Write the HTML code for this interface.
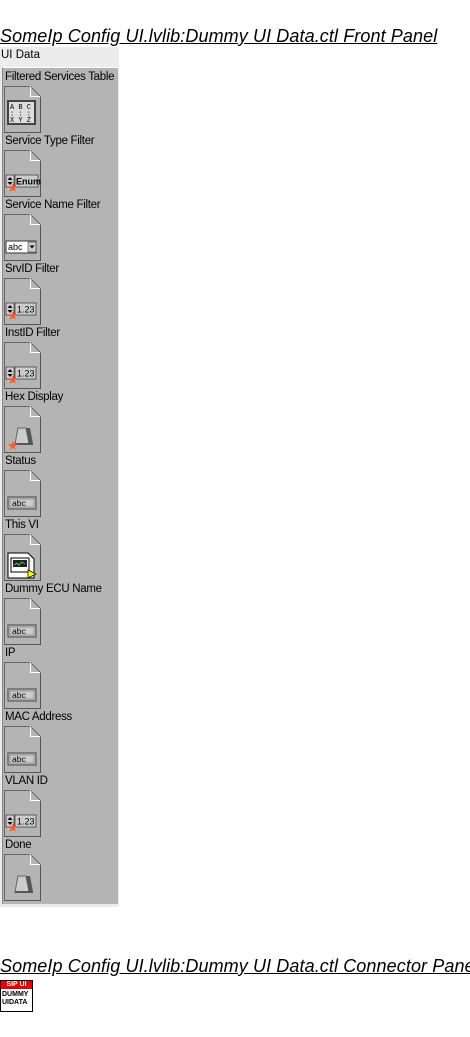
<!DOCTYPE html><html><head><style>
body{margin:0;background:#fff;width:470px;height:1037px;position:relative;overflow:hidden;font-family:"Liberation Sans",sans-serif}
.t{position:absolute;left:0;font-style:italic;text-decoration:underline;font-size:18px;color:#000;white-space:nowrap;letter-spacing:0.1px}
.l{position:absolute;left:5px;font-size:11.5px;color:#000;white-space:nowrap;letter-spacing:-0.3px}
.d{position:absolute;left:4px}
</style></head><body>
<div class="t" style="top:26px">SomeIp Config UI.lvlib:Dummy UI Data.ctl Front Panel</div>
<div style="position:absolute;left:0;top:47px;width:119px;height:860px;background:#ececec"></div>
<div style="position:absolute;left:1px;top:49px;font-size:11.5px">UI Data</div>
<div style="position:absolute;left:2px;top:67px;width:115px;height:836px;background:#b4b4b4;border-top:1px solid #fff;border-left:1px solid #888"></div>
<div id="c"></div>
<script>
var items=[["Filtered Services Table","tbl"],["Service Type Filter","enum"],["Service Name Filter","ring"],["SrvID Filter","num"],["InstID Filter","num"],["Hex Display","bool"],["Status","str"],["This VI","vi"],["Dummy ECU Name","str"],["IP","str"],["MAC Address","str"],["VLAN ID","num"],["Done","boolns"]];
var star='<text x="3" y="42" font-size="13" fill="#ff5a28" font-family="DejaVu Sans">★</text>';
var ud='<rect x="2" y="25" width="8" height="12" fill="#d0d0d0" stroke="#444" stroke-width="0.8"/><path d="M3.5 30h5l-2.5-3z M3.5 32h5l-2.5 3z" fill="#000"/>';
function g(k){switch(k){
case"tbl":return'<rect x="3" y="14" width="29" height="25" fill="#444"/><rect x="5" y="16" width="25" height="21" fill="#ddd"/><text x="6" y="23" font-size="7" font-family="Liberation Mono">A B C</text><text x="6" y="29.5" font-size="7" font-family="Liberation Mono">: : :</text><text x="6" y="36" font-size="7" font-family="Liberation Mono">X Y Z</text>';
case"enum":return ud+'<rect x="11" y="25" width="23" height="12" fill="#ccc" stroke="#444" stroke-width="0.8"/><text x="12" y="34.5" font-size="9" font-weight="bold" font-family="Liberation Sans">Enum</text>'+star;
case"ring":return'<rect x="2" y="27" width="30" height="12" fill="#fff" stroke="#333"/><text x="4" y="36" font-size="9" font-family="Liberation Sans">abc</text><rect x="24" y="28" width="8" height="10" fill="#ccc" stroke="#444" stroke-width="0.6"/><path d="M25.5 31.5h5l-2.5 3z"/>';
case"num":return ud+'<rect x="11" y="25" width="21" height="12" fill="#ccc" stroke="#444" stroke-width="0.8"/><text x="13" y="34.5" font-size="9" font-family="Liberation Sans">1.23</text>'+star;
case"bool":case"boolns":return'<path d="M14 22h8l3 16h-14z" fill="#ccc" stroke="#666"/><path d="M22 22l3 16h4l-3-16z" fill="#555"/><path d="M11 38h18" stroke="#555" stroke-width="2"/>'+(k=="bool"?star.replace('y="42"','y="44"'):'');
case"str":return'<rect x="4" y="27" width="28" height="12" fill="#bbb" stroke="#444"/><rect x="6" y="29" width="24" height="8" fill="#ccc" stroke="#666" stroke-width="0.5"/><text x="8" y="36" font-size="8.5" font-family="Liberation Sans">abc</text>';
case"vi":return'<path d="M4 19h20l6 6v19h-26z" fill="#fff" stroke="#000"/><rect x="7" y="24" width="18" height="14" fill="#fff" stroke="#000"/><rect x="9" y="26" width="14" height="7" fill="#222"/><path d="M10 31l3-2 2 2 3-3 3 2" stroke="#4c4" fill="none"/><path d="M24 36l8 4-8 4z" fill="#ff0" stroke="#000" stroke-width="0.7"/>';}}
var h='';
items.forEach(function(it,i){var y=71+64*i;
h+='<div class="l" style="top:'+y+'px">'+it[0]+'</div>';
h+='<svg class="d" style="top:'+(y+15)+'px" width="37" height="47"><path d="M0.5 46.5V0.5h26l10 10v36z" fill="#b4b4b4" stroke="#666"/><path d="M26.5 0.5v10h10" fill="none" stroke="#fff"/><path d="M0.5 46.5h36V10.5" fill="none" stroke="#555"/>'+g(it[1])+'</svg>';});
document.getElementById('c').innerHTML=h;
</script>
<div class="t" style="top:956px">SomeIp Config UI.lvlib:Dummy UI Data.ctl Connector Pane</div>
<div style="position:absolute;left:0;top:980px;width:31px;height:30px;border:1px solid #000;background:#fff">
<div style="background:#e00;color:#fff;font-size:7px;font-weight:bold;text-align:center;height:8px;line-height:8px">SIP UI</div>
<div style="font-size:7px;font-weight:bold;line-height:8px;padding:2px 0 0 1px">DUMMY<br>UIDATA</div></div>
</body></html>
